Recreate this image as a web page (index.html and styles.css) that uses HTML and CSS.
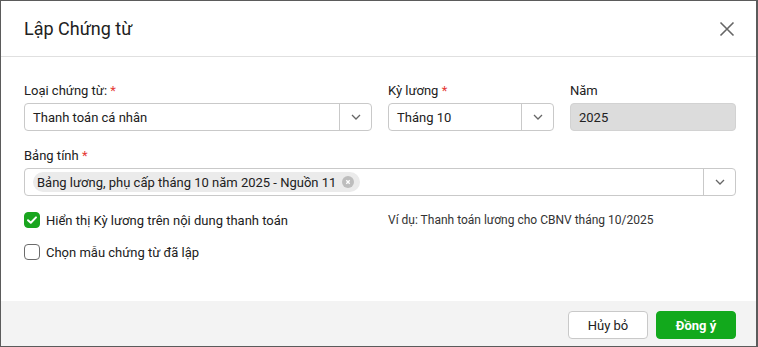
FILE: index.html
```html
<!DOCTYPE html>
<html lang="vi">
<head>
<meta charset="utf-8">
<link rel="stylesheet" href="styles.css">
</head>
<body>
<div class="dialog">
  <div class="header">
    <div class="title">Lập Chứng từ</div>
    <button class="close" aria-label="Đóng">
      <svg width="16" height="16" viewBox="0 0 16 16"><path d="M1.5 1.5L14.5 14.5M14.5 1.5L1.5 14.5" stroke="#666" stroke-width="1.6" fill="none"/></svg>
    </button>
  </div>
  <div class="body">
    <div class="grid">
      <div class="field">
        <label class="label">Loại chứng từ: <span class="req">*</span></label>
        <div class="select">
          <span class="value">Thanh toán cá nhân</span>
          <span class="arrow"><svg width="10" height="6" viewBox="0 0 10 6"><path d="M1 1L5 5L9 1" stroke="#666" stroke-width="1.3" fill="none"/></svg></span>
        </div>
      </div>
      <div class="field">
        <label class="label">Kỳ lương <span class="req">*</span></label>
        <div class="select">
          <span class="value">Tháng 10</span>
          <span class="arrow"><svg width="10" height="6" viewBox="0 0 10 6"><path d="M1 1L5 5L9 1" stroke="#666" stroke-width="1.3" fill="none"/></svg></span>
        </div>
      </div>
      <div class="field">
        <label class="label">Năm</label>
        <div class="input disabled"><span class="value">2025</span></div>
      </div>
    </div>
    <div class="field wide">
      <label class="label">Bảng tính <span class="req">*</span></label>
      <div class="select">
        <span class="tags">
          <span class="tag">Bảng lương, phụ cấp tháng 10 năm 2025 - Nguồn 11
            <span class="tag-x"><svg width="12" height="12" viewBox="0 0 12 12"><circle cx="6" cy="6" r="6" fill="#bdbdbd"/><path d="M4.3 4.3L7.7 7.7M7.7 4.3L4.3 7.7" stroke="#fff" stroke-width="1.3"/></svg></span>
          </span>
        </span>
        <span class="arrow"><svg width="10" height="6" viewBox="0 0 10 6"><path d="M1 1L5 5L9 1" stroke="#666" stroke-width="1.3" fill="none"/></svg></span>
      </div>
    </div>
    <div class="check-row">
      <label class="check">
        <span class="box checked"><svg width="12" height="10" viewBox="0 0 12 10"><path d="M2 5.2L4.8 7.8L10 2.4" stroke="#fff" stroke-width="2" fill="none" stroke-linecap="round" stroke-linejoin="round"/></svg></span>
        <span>Hiển thị Kỳ lương trên nội dung thanh toán</span>
      </label>
      <span class="hint">Ví dụ: Thanh toán lương cho CBNV tháng 10/2025</span>
    </div>
    <div class="check-row second">
      <label class="check">
        <span class="box"></span>
        <span>Chọn mẫu chứng từ đã lập</span>
      </label>
    </div>
  </div>
  <div class="footer">
    <button class="btn">Hủy bỏ</button>
    <button class="btn primary">Đồng ý</button>
  </div>
</div>
</body>
</html>
```

FILE: styles.css
```css
* { box-sizing: border-box; }
html, body { margin: 0; padding: 0; background: #fff; }
body {
  font-family: Roboto, "Liberation Sans", Arial, sans-serif;
  color: #212121;
  font-size: 13px;
  width: 758px;
  height: 347px;
}
.dialog {
  width: 758px;
  height: 347px;
  border: 1px solid #5b5b5b;
  border-right-width: 2px;
  display: flex;
  flex-direction: column;
  background: #fff;
}
.header {
  height: 56px;
  flex: none;
  display: flex;
  align-items: center;
  justify-content: space-between;
  padding: 0 21px 0 23px;
  border-bottom: 1px solid #e0e0e0;
}
.title { font-size: 18px; color: #212121; }
.close {
  border: 0; background: none; padding: 0; width: 16px; height: 16px;
  display: flex; align-items: center; justify-content: center;
}
.body {
  flex: 1;
  padding: 25px 0 0 23px;
}
.grid {
  display: grid;
  grid-template-columns: 348px 166px 166px;
  column-gap: 16px;
}
.field { display: flex; flex-direction: column; }
.label {
  height: 18px; line-height: 18px; margin-bottom: 3px;
  font-size: 13px; color: #212121;
}
.req { color: #e53935; }
.select, .input {
  height: 28px;
  border: 1px solid #c9c9c9;
  border-radius: 4px;
  display: flex;
  align-items: center;
  background: #fff;
}
.input.disabled { background: #dcdcdc; border-color: #d2d2d2; }
.value { flex: 1; padding-left: 8px; font-size: 13px; color: #212121; }
.arrow {
  width: 32px; height: 100%;
  border-left: 1px solid #c9c9c9;
  display: flex; align-items: center; justify-content: center;
}
.wide { width: 712px; margin-top: 16px; }
.tags { flex: 1; padding-left: 8px; display: flex; align-items: center; }
.tag {
  height: 20px;
  border-radius: 10px;
  background: #ebebeb;
  padding: 0 6px 0 4px;
  display: inline-flex; align-items: center; gap: 6px;
  font-size: 13px; color: #212121;
}
.tag-x { display: flex; }
.check-row {
  display: flex; align-items: center;
  height: 20px; margin-top: 14px;
}
.check-row.second { margin-top: 12px; }
.check {
  width: 364px;
  display: flex; align-items: center; gap: 6px;
  font-size: 13px; color: #212121;
}
.box {
  width: 16px; height: 16px; flex: none;
  border: 1px solid #6b6b6b; border-radius: 4px;
  display: flex; align-items: center; justify-content: center;
}
.box.checked { background: #1aa51f; border-color: #1aa51f; }
.hint { font-size: 12px; color: #333; }
.footer {
  height: 45px;
  flex: none;
  background: #f3f3f3;
  display: flex;
  justify-content: flex-end;
  align-items: flex-start;
  gap: 8px;
  padding: 10px 20px 0 0;
}
.btn {
  width: 80px; height: 28px;
  border: 1px solid #c9c9c9; border-radius: 4px;
  background: #fff;
  font-family: Roboto, "Liberation Sans", Arial, sans-serif;
  font-size: 13px; color: #212121;
}
.btn.primary {
  background: #12a91c; border-color: #12a91c;
  color: #fff; font-weight: 700;
}
```
